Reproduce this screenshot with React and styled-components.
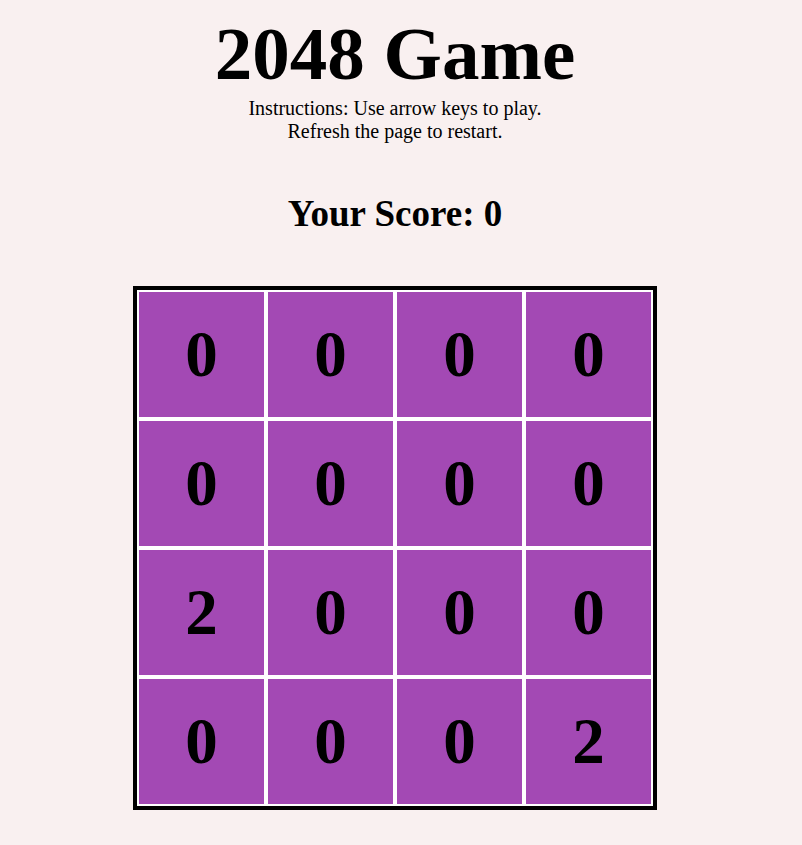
import styled, { createGlobalStyle } from 'styled-components';

const GlobalStyle = createGlobalStyle`
  html, body {
    margin: 0;
    padding: 0;
    background-color: #f9f0f0;
  }
  body {
    font-family: "Liberation Serif", "Times New Roman", serif;
    color: #000;
  }
`;

const Page = styled.div`
  display: flex;
  flex-direction: column;
  align-items: center;
  padding: 11px 12px 0 0;
`;

const Title = styled.h1`
  margin: 0;
  font-size: 75px;
  font-weight: bold;
`;

const Instructions = styled.p`
  margin: 0;
  font-size: 20px;
  text-align: center;
`;

const Score = styled.h2`
  margin: 49px 0 0;
  font-size: 37px;
  font-weight: bold;
`;

const Board = styled.div`
  margin-top: 51px;
  display: grid;
  grid-template-columns: repeat(4, 129px);
  grid-auto-rows: 129px;
  border: 4px solid #000;
`;

const Cell = styled.div`
  display: flex;
  align-items: center;
  justify-content: center;
  border: 2px solid #fff;
  background-color: #a349b4;
  font-size: 65px;
  font-weight: bold;
`;

const board = [
  [0, 0, 0, 0],
  [0, 0, 0, 0],
  [2, 0, 0, 0],
  [0, 0, 0, 2],
];

const App = () => {
  return (
    <>
      <GlobalStyle />
      <Page>
        <Title>2048 Game</Title>
        <Instructions>
          Instructions: Use arrow keys to play.
          <br />
          Refresh the page to restart.
        </Instructions>
        <Score>Your Score: 0</Score>
        <Board>
          {board.flat().map((value, i) => (
            <Cell key={i}>{value}</Cell>
          ))}
        </Board>
      </Page>
    </>
  );
};

export default App;
